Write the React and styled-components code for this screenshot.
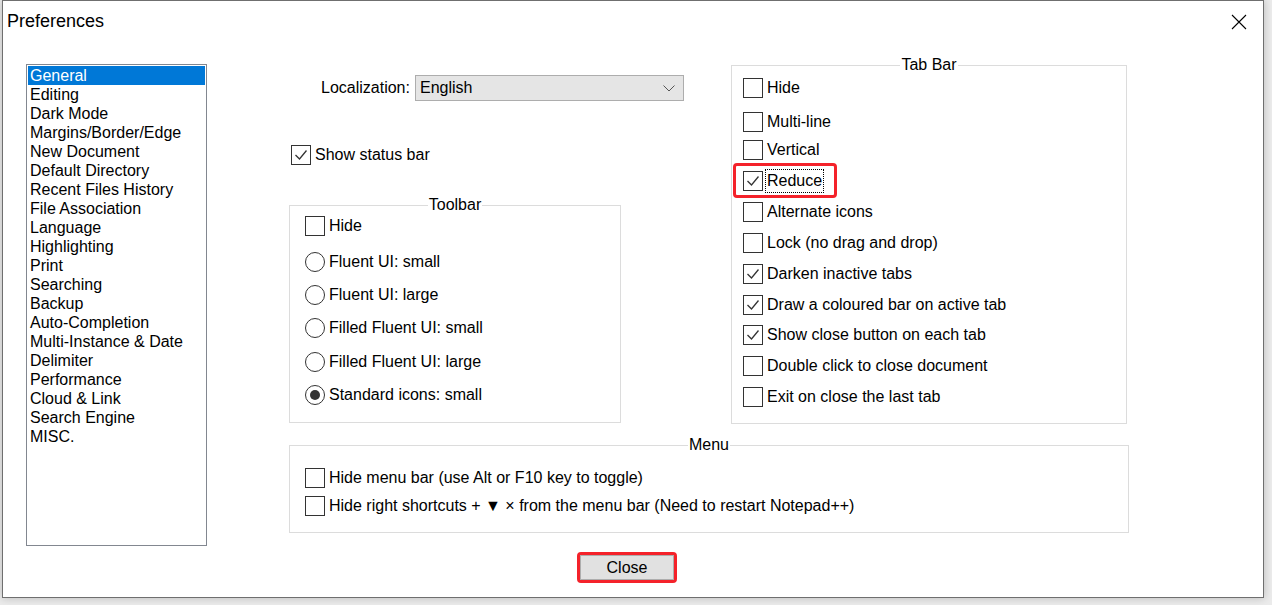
import styled, { createGlobalStyle } from "styled-components";

const categories = [
  "General",
  "Editing",
  "Dark Mode",
  "Margins/Border/Edge",
  "New Document",
  "Default Directory",
  "Recent Files History",
  "File Association",
  "Language",
  "Highlighting",
  "Print",
  "Searching",
  "Backup",
  "Auto-Completion",
  "Multi-Instance & Date",
  "Delimiter",
  "Performance",
  "Cloud & Link",
  "Search Engine",
  "MISC.",
];

const toolbarOptions = [
  { label: "Fluent UI: small", mt: 8 },
  { label: "Fluent UI: large", mt: 5 },
  { label: "Filled Fluent UI: small", mt: 5 },
  { label: "Filled Fluent UI: large", mt: 6 },
  { label: "Standard icons: small", mt: 5, checked: true },
];

const tabBarOptions = [
  { label: "Hide", mt: 2 },
  { label: "Multi-line", mt: 6 },
  { label: "Vertical", mt: 0 },
  { label: "Reduce", mt: 3, checked: true, marked: true },
  { label: "Alternate icons", mt: 3 },
  { label: "Lock (no drag and drop)", mt: 3 },
  { label: "Darken inactive tabs", mt: 3, checked: true },
  { label: "Draw a coloured bar on active tab", mt: 3, checked: true },
  { label: "Show close button on each tab", mt: 2, checked: true },
  { label: "Double click to close document", mt: 3 },
  { label: "Exit on close the last tab", mt: 3 },
];

const GlobalStyle = createGlobalStyle`
  html, body {
    margin: 0;
    padding: 0;
    background: #ebebeb;
  }
  body {
    font-family: "Liberation Sans", Arial, sans-serif;
    font-size: 16px;
    color: #000;
  }
`;

const Screen = styled.div`
  width: 1272px;
  height: 605px;
  padding-left: 2px;
  box-sizing: border-box;
  overflow: hidden;
`;

const Window = styled.div`
  width: 1262px;
  height: 598px;
  box-sizing: border-box;
  background: #fff;
  border: 1px solid #6f6f6f;
  box-shadow: 0 0 8px rgba(0, 0, 0, 0.22);
  display: flex;
  flex-direction: column;
`;

const TitleBar = styled.div`
  height: 41px;
  display: flex;
  align-items: center;
  justify-content: space-between;
  padding: 0 16px 0 4px;
  h1 {
    margin: 0;
    font-size: 18px;
    font-weight: 400;
  }
  svg {
    display: block;
  }
`;

const Body = styled.div`
  display: flex;
  padding-top: 16px;
`;

const ListBox = styled.ul`
  list-style: none;
  margin: 6px 0 0 23px;
  padding: 1px;
  width: 181px;
  height: 482px;
  box-sizing: border-box;
  border: 1px solid #828790;
`;

const ListItem = styled.li`
  height: 19px;
  line-height: 19px;
  padding-left: 2px;
  white-space: nowrap;
  background: ${(p) => (p.$selected ? "#0078d7" : "transparent")};
  color: ${(p) => (p.$selected ? "#fff" : "#000")};
`;

const Content = styled.div`
  margin-left: 82px;
  display: flex;
  flex-direction: column;
`;

const TopRow = styled.div`
  display: flex;
  gap: 110px;
  align-items: flex-start;
`;

const LeftCol = styled.div`
  width: 332px;
  display: flex;
  flex-direction: column;
`;

const LocaleRow = styled.div`
  margin-top: 17px;
  height: 26px;
  display: flex;
  align-items: center;
  gap: 5px;
  padding-left: 32px;
`;

const Select = styled.div`
  flex: none;
  width: 269px;
  height: 26px;
  box-sizing: border-box;
  border: 1px solid #adadad;
  background: #e5e5e5;
  display: flex;
  align-items: center;
  justify-content: space-between;
  padding: 0 8px 0 4px;
`;

const Group = styled.fieldset`
  margin: ${(p) => p.$mt || 0}px 0 0;
  width: ${(p) => p.$w}px;
  box-sizing: border-box;
  min-width: 0;
  border: 1px solid #dcdcdc;
  padding: 0 0 ${(p) => p.$pb}px;
`;

const Legend = styled.legend`
  margin: 0 auto;
  padding: 0 1px;
  line-height: 14px;
  font-size: 16px;
`;

const Options = styled.div`
  display: flex;
  flex-direction: column;
  padding-left: ${(p) => p.$pl}px;
`;

const Row = styled.label`
  position: relative;
  display: flex;
  align-items: center;
  gap: 4px;
  width: fit-content;
  height: 28px;
  margin-top: ${(p) => p.$mt || 0}px;
  padding-left: ${(p) => p.$pl || 0}px;
  white-space: nowrap;
  ${(p) =>
    p.$marked &&
    `
    &::after {
      content: "";
      position: absolute;
      left: -10px;
      right: -14px;
      top: -4px;
      bottom: -3px;
      border: 3px solid #f4222a;
      border-radius: 4px;
    }
  `}
`;

const Text = styled.span`
  ${(p) =>
    p.$focus &&
    `
    outline: 1px dotted #000;
    line-height: 22px;
    padding: 0 1px;
    margin-left: -1px;
  `}
`;

const Box = styled.span`
  width: 20px;
  height: 20px;
  box-sizing: border-box;
  border: 1px solid #333;
  background: #fff;
  flex: none;
  svg {
    display: block;
  }
`;

const Circle = styled.span`
  width: 20px;
  height: 20px;
  box-sizing: border-box;
  border: 1px solid #333;
  border-radius: 50%;
  background: #fff;
  flex: none;
  display: flex;
  align-items: center;
  justify-content: center;
  &::after {
    content: "";
    width: 10px;
    height: 10px;
    border-radius: 50%;
    background: ${(p) => (p.$checked ? "#333" : "transparent")};
  }
`;

const Footer = styled.div`
  display: flex;
  justify-content: center;
  padding-right: 12px;
  margin-top: 6px;
`;

const CloseMark = styled.div`
  border: 3px solid #f4222a;
  border-radius: 4px;
`;

const Button = styled.button`
  display: block;
  width: 94px;
  height: 25px;
  margin: 0;
  border: 1px solid #adadad;
  background: #e1e1e1;
  font-family: inherit;
  font-size: 16px;
  color: #000;
  padding: 0;
`;

const Checkbox = ({ label, checked, mt, pl, marked, focus }) => (
  <Row $mt={mt} $pl={pl} $marked={marked}>
    <Box>
      {checked && (
        <svg width="18" height="18" viewBox="0 0 18 18">
          <polyline
            points="3.5,9 7.5,13 14.5,4.5"
            fill="none"
            stroke="#333"
            strokeWidth="1.3"
          />
        </svg>
      )}
    </Box>
    <Text $focus={focus}>{label}</Text>
  </Row>
);

const Radio = ({ label, checked, mt }) => (
  <Row $mt={mt}>
    <Circle $checked={checked} />
    <Text>{label}</Text>
  </Row>
);

export default function App() {
  return (
    <Screen>
      <GlobalStyle />
      <Window>
        <TitleBar>
          <h1>Preferences</h1>
          <svg width="16" height="16" viewBox="0 0 16 16">
            <path d="M1 1 L15 15 M15 1 L1 15" stroke="#000" strokeWidth="1.1" />
          </svg>
        </TitleBar>
        <Body>
          <ListBox>
            {categories.map((c, i) => (
              <ListItem key={c} $selected={i === 0}>
                {c}
              </ListItem>
            ))}
          </ListBox>
          <Content>
            <TopRow>
              <LeftCol>
                <LocaleRow>
                  <span>Localization:</span>
                  <Select>
                    <span>English</span>
                    <svg width="12" height="7" viewBox="0 0 12 7">
                      <polyline points="0.5,0.5 6,6 11.5,0.5" fill="none" stroke="#555" strokeWidth="1" />
                    </svg>
                  </Select>
                </LocaleRow>
                <Checkbox label="Show status bar" checked mt={40} pl={2} />
                <Group $mt={29} $w={332} $pb={13}>
                  <Legend>Toolbar</Legend>
                  <Options $pl={15}>
                    <Checkbox label="Hide" />
                    {toolbarOptions.map((o) => (
                      <Radio key={o.label} label={o.label} mt={o.mt} checked={o.checked} />
                    ))}
                  </Options>
                </Group>
              </LeftCol>
              <Group $w={396} $pb={12}>
                <Legend>Tab Bar</Legend>
                <Options $pl={11}>
                  {tabBarOptions.map((o) => (
                    <Checkbox
                      key={o.label}
                      label={o.label}
                      mt={o.mt}
                      checked={o.checked}
                      marked={o.marked}
                      focus={o.marked}
                    />
                  ))}
                </Options>
              </Group>
            </TopRow>
            <Group $mt={14} $w={840} $pb={12}>
              <Legend>Menu</Legend>
              <Options $pl={15}>
                <Checkbox label="Hide menu bar (use Alt or F10 key to toggle)" mt={12} />
                <Checkbox label="Hide right shortcuts + ▼ × from the menu bar (Need to restart Notepad++)" />
              </Options>
            </Group>
          </Content>
        </Body>
        <Footer>
          <CloseMark>
            <Button>Close</Button>
          </CloseMark>
        </Footer>
      </Window>
    </Screen>
  );
}
